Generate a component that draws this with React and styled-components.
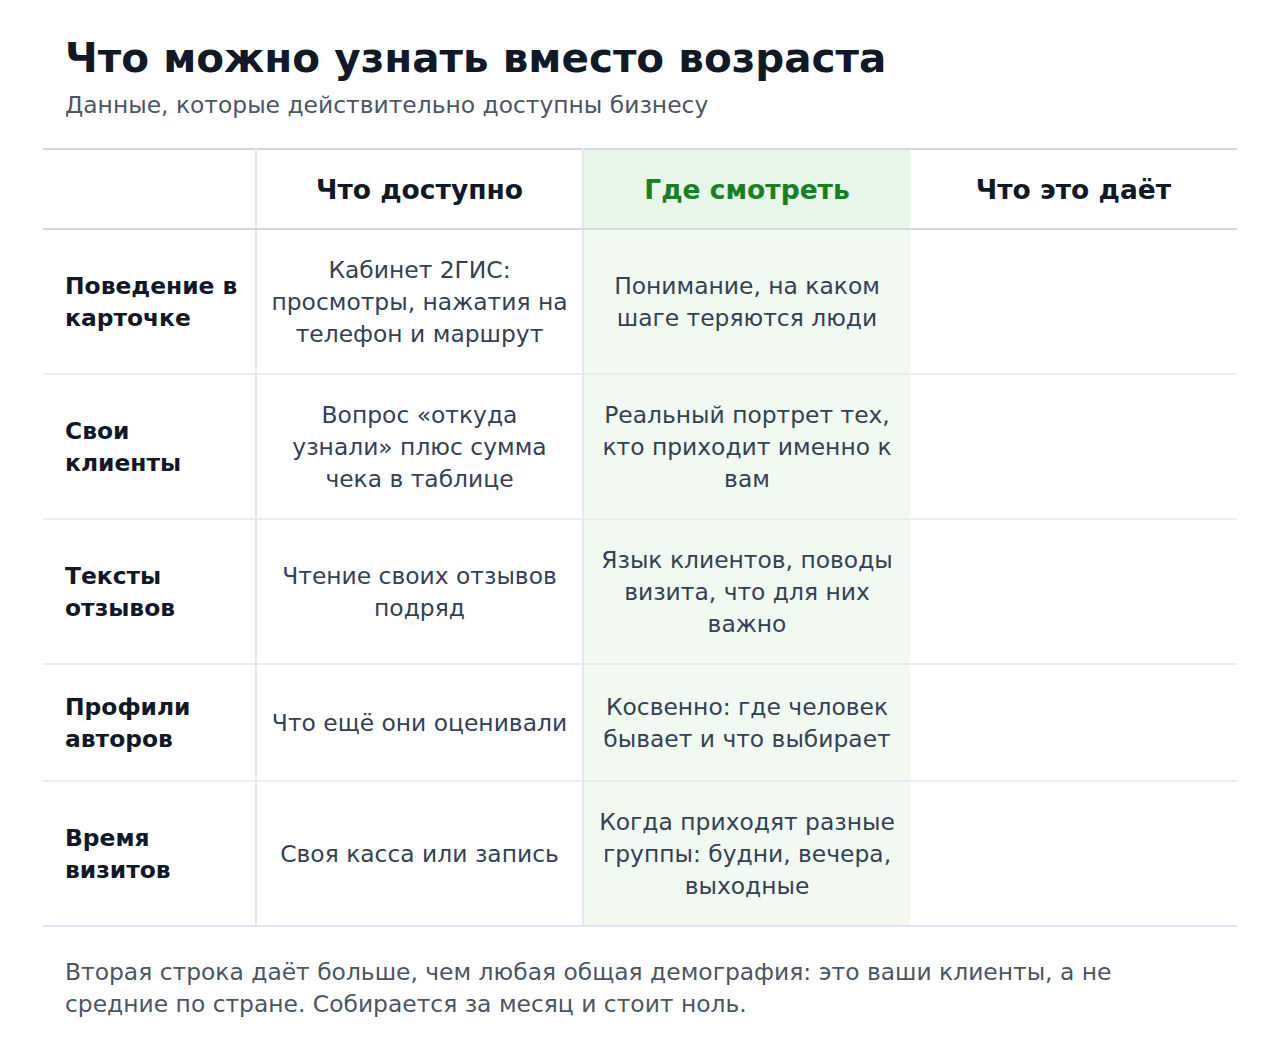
import React from 'react';
import styled, {createGlobalStyle} from 'styled-components';

const GlobalStyle = createGlobalStyle`
  body {
    margin: 0;
    background: #ffffff;
    font-family: "DejaVu Sans", "Liberation Sans", sans-serif;
  }
`;

const rows = [
    {
        label: 'Поведение в карточке',
        available: 'Кабинет 2ГИС: просмотры, нажатия на телефон и маршрут',
        where: 'Понимание, на каком шаге теряются люди',
    },
    {
        label: 'Свои клиенты',
        available: 'Вопрос «откуда узнали» плюс сумма чека в таблице',
        where: 'Реальный портрет тех, кто приходит именно к вам',
    },
    {
        label: 'Тексты отзывов',
        available: 'Чтение своих отзывов подряд',
        where: 'Язык клиентов, поводы визита, что для них важно',
    },
    {
        label: 'Профили авторов',
        available: 'Что ещё они оценивали',
        where: 'Косвенно: где человек бывает и что выбирает',
    },
    {
        label: 'Время визитов',
        available: 'Своя касса или запись',
        where: 'Когда приходят разные группы: будни, вечера, выходные',
    },
];

class App extends React.Component {
    render() {
        return (
            <Page>
                <GlobalStyle/>
                <Header>
                    <Title>Что можно узнать вместо возраста</Title>
                    <Subtitle>Данные, которые действительно доступны бизнесу</Subtitle>
                </Header>

                <Table>
                    <colgroup>
                        <col style={{width: 213}}/>
                        <col style={{width: 327}}/>
                        <col style={{width: 327}}/>
                        <col style={{width: 327}}/>
                    </colgroup>
                    <thead>
                        <tr>
                            <HeadCell/>
                            <HeadCell $divided>Что доступно</HeadCell>
                            <HeadCell $accent>Где смотреть</HeadCell>
                            <HeadCell>Что это даёт</HeadCell>
                        </tr>
                    </thead>
                    <tbody>
                        {rows.map((row, i) => (
                            <Row key={row.label} $last={i === rows.length - 1}>
                                <LabelCell>{row.label}</LabelCell>
                                <Cell $divided>{row.available}</Cell>
                                <Cell $accent>{row.where}</Cell>
                                <Cell/>
                            </Row>
                        ))}
                    </tbody>
                </Table>

                <Note>
                    Вторая строка даёт больше, чем любая общая демография: это ваши клиенты, а не
                    средние по стране. Собирается за месяц и стоит ноль.
                </Note>
            </Page>
        );
    }
}

const Page = styled.div`
    width: 1280px;
    box-sizing: border-box;
    padding: 34px 43px 30px;
`;

const Header = styled.header`
    padding: 0 22px;
    margin-bottom: 27px;
`;

const Title = styled.h1`
    margin: 0;
    font-size: 40.5px;
    line-height: 48px;
    font-weight: 700;
    color: #111827;
`;

const Subtitle = styled.p`
    margin: 7px 0 0;
    font-size: 23.4px;
    line-height: 32px;
    color: #4b5563;
`;

const Table = styled.table`
    width: 1194px;
    table-layout: fixed;
    border-collapse: collapse;
    border-top: 2px solid #cfd8e3;
`;

const HeadCell = styled.th`
    height: 78px;
    padding: 0 12px;
    font-size: 26.5px;
    font-weight: 700;
    text-align: center;
    color: ${p => (p.$accent ? '#17801f' : '#111827')};
    background: ${p => (p.$accent ? '#e8f5e9' : 'transparent')};
    border-bottom: 2px solid #cfd8e3;
    border-left: ${p => (p.$divided ? '2px solid #e2e8f0' : 'none')};
    border-right: ${p => (p.$divided ? '2px solid #e2e8f0' : 'none')};
`;

const Row = styled.tr`
    border-bottom: ${p => (p.$last ? '2px solid #dfe5ee' : '2px solid #e8edf3')};
`;

const Cell = styled.td`
    padding: 23.5px 14px;
    font-size: 23.4px;
    line-height: 32px;
    text-align: center;
    vertical-align: middle;
    color: #334155;
    background: ${p => (p.$accent ? '#f2f9f1' : 'transparent')};
    border-left: ${p => (p.$divided ? '2px solid #e2e8f0' : 'none')};
    border-right: ${p => (p.$divided ? '2px solid #e2e8f0' : 'none')};
`;

const LabelCell = styled.td`
    padding: 25.5px 12px 25.5px 22px;
    font-size: 23.4px;
    line-height: 32px;
    font-weight: 700;
    color: #111827;
    vertical-align: middle;
`;

const Note = styled.p`
    margin: 29px 0 0;
    padding: 0 22px;
    font-size: 23.4px;
    line-height: 32px;
    color: #4b5563;
`;

export default App;
